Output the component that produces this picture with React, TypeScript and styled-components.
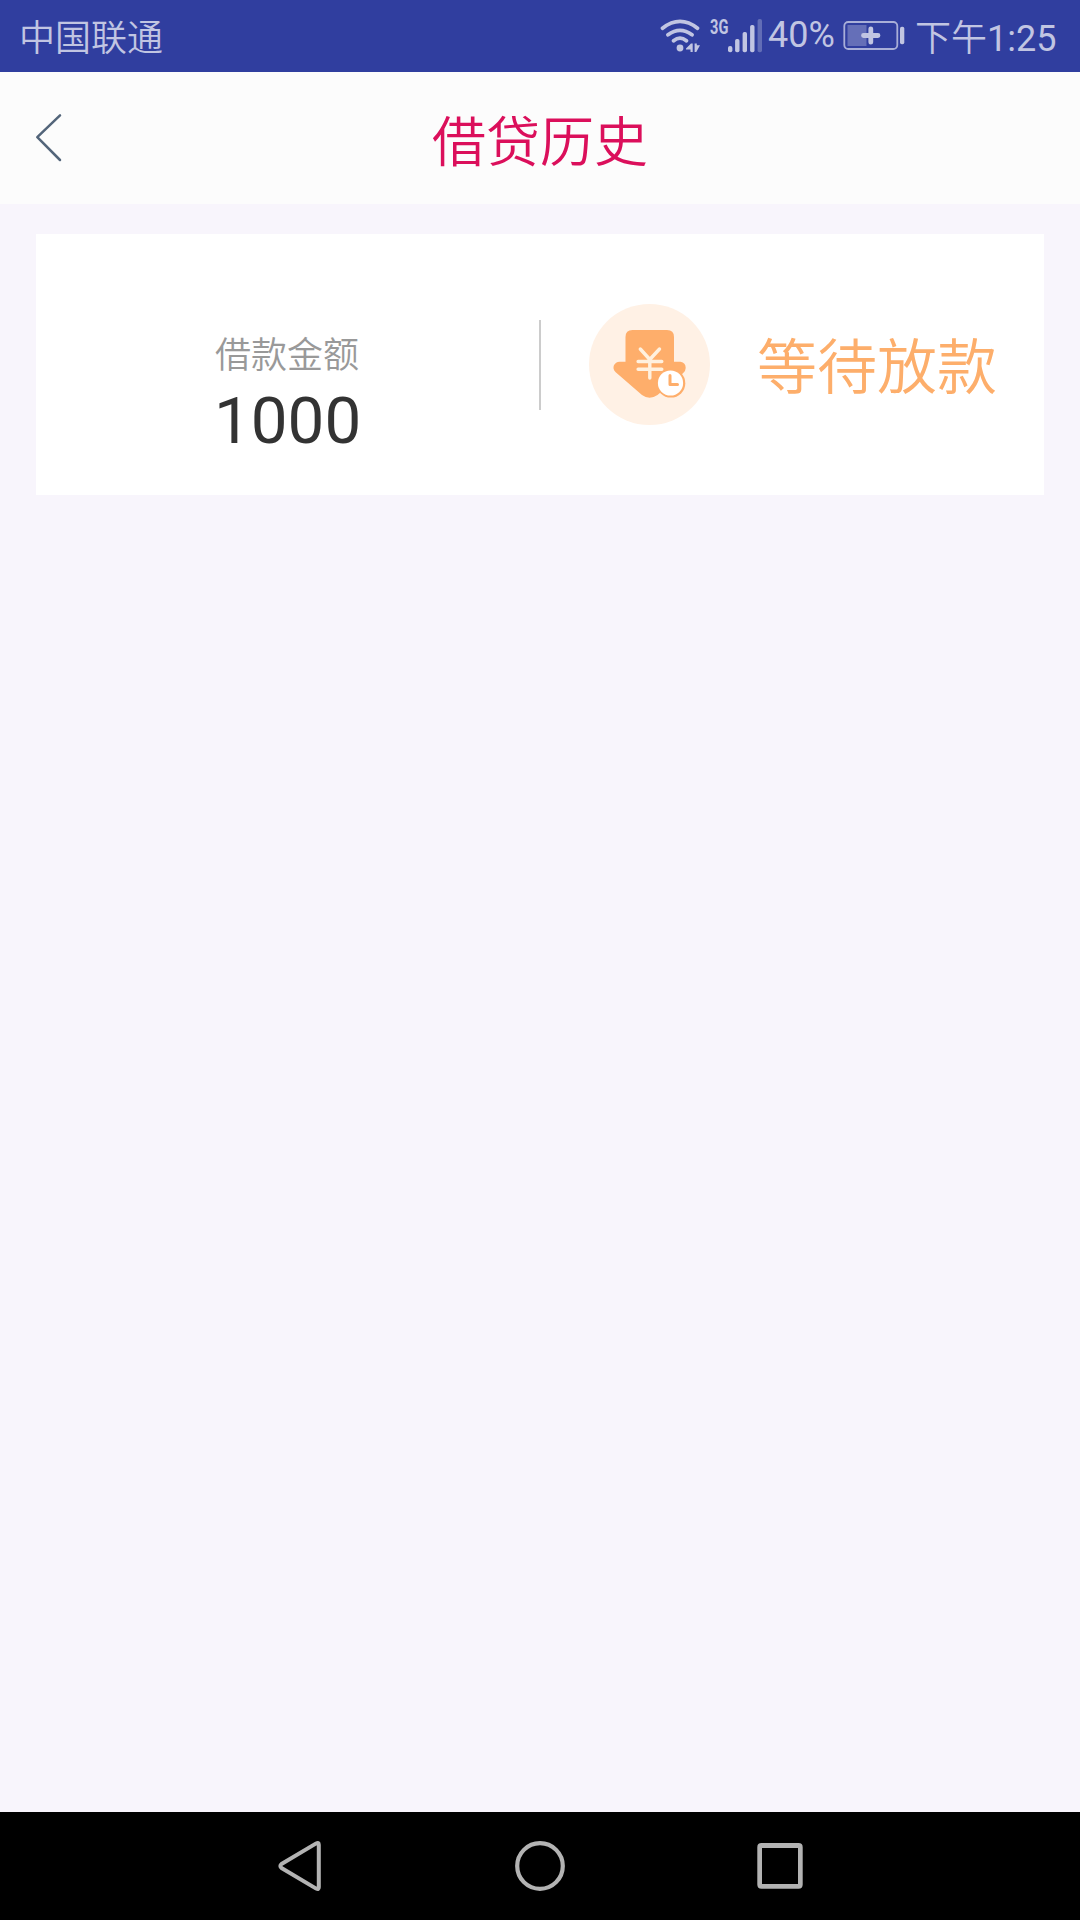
import React from 'react';
import styled, { createGlobalStyle } from 'styled-components';

const GlobalStyle = createGlobalStyle`
  * { box-sizing: border-box; }
  body { margin: 0; background: #f8f5fc; }
  svg { display: block; flex: none; }
`;

const Screen = styled.div`
  display: flex;
  flex-direction: column;
  width: 1080px;
  height: 1920px;
  overflow: hidden;
  background: #f8f5fc;
  font-family: Roboto, 'Noto Sans CJK SC', sans-serif;
`;

const StatusBar = styled.header`
  display: flex;
  align-items: flex-start;
  height: 72px;
  padding: 0 24px 0 19px;
  background: #303e9f;
`;

const StatusText = styled.span<{ $top: number; $left?: number; $weight?: number }>`
  flex: none;
  margin: ${p => p.$top}px 0 0 ${p => p.$left ?? 0}px;
  color: #c1c5e2;
  font-size: 36px;
  line-height: 44px;
  font-weight: ${p => p.$weight ?? 350};
  white-space: nowrap;
`;

const ClockDigits = styled.span`
  font-weight: 400;
`;

const Indicators = styled.div`
  display: flex;
  align-items: flex-start;
  width: 396px;
  height: 72px;
  margin-left: auto;
`;

const NetworkLabel = styled.span`
  width: 18px;
  margin: 17px 0 0 9px;
  color: #c1c5e2;
  font-size: 20px;
  font-weight: 700;
  line-height: 20px;
  white-space: nowrap;
  transform: scaleX(0.73);
  transform-origin: left center;
`;

const TitleBar = styled.div`
  display: grid;
  grid-template-columns: 96px 1fr 96px;
  height: 132px;
  background: #fcfcfc;
`;

const BackButton = styled.button`
  padding: 40px 0 0 33px;
  border: 0;
  background: none;
  display: flex;
  align-items: flex-start;
`;

const Title = styled.h1`
  margin: 32px 0 0;
  color: #db0f5b;
  font-size: 54px;
  font-weight: 350;
  line-height: 80px;
  text-align: center;
`;

const Content = styled.main`
  flex: 1;
  padding: 30px 36px;
`;

const LoanCard = styled.section`
  display: flex;
  align-items: center;
  height: 261px;
  background: #fff;
`;

const Amount = styled.div`
  display: flex;
  flex-direction: column;
  width: 503px;
  height: 261px;
  padding: 96px 0 0 179px;
`;

const AmountLabel = styled.span`
  color: #999;
  font-size: 36px;
  font-weight: 350;
  line-height: 52px;
`;

const AmountValue = styled.span`
  margin: 1px 0 0 -1px;
  color: #333;
  font-size: 65.5px;
  line-height: 76px;
`;

const Divider = styled.div`
  width: 2px;
  height: 90px;
  background: #ccc;
`;

const StatusBadge = styled.div`
  display: flex;
  align-items: center;
  justify-content: center;
  width: 121px;
  height: 121px;
  margin-left: 48px;
  border-radius: 50%;
  background: #fff1e5;
`;

const LoanStatus = styled.span`
  margin: 9px 0 0 47px;
  color: #fdae6b;
  font-size: 60px;
  font-weight: 350;
  line-height: 84px;
  white-space: nowrap;
`;

const NavBar = styled.nav`
  display: flex;
  align-items: center;
  justify-content: center;
  gap: 180px;
  height: 108px;
  background: #000;
`;

const NavButton = styled.button`
  display: flex;
  padding: 0;
  border: 0;
  background: none;
`;

const WifiIcon = () => (
  <svg width="41" height="72" viewBox="660 0 41 72" fill="none" stroke="#c1c5e2" strokeWidth="3.8" strokeLinecap="round">
    <path d="M662.5 28.2Q680 14.5 697.5 28.2M668 34.8Q680 26 692 34.8M673.6 40.7Q680 35.6 686.4 40.7" />
    <circle cx="680" cy="48" r="3.4" fill="#c1c5e2" stroke="none" />
    <path d="M686 48.5L691 43.5H692.7V52H690.5V49.4H686ZM694.6 43.5H696.8V45.3H700L696.3 52H694.6Z" fill="#c1c5e2" stroke="none" />
  </svg>
);

const SignalIcon = () => (
  <svg width="35" height="72" viewBox="728 0 35 72" fill="#c1c5e2">
    <rect x="728" y="46" width="4.4" height="6.3" rx="2" />
    <rect x="735.1" y="39" width="4.4" height="13.3" rx="1.8" />
    <rect x="742.6" y="32" width="4.4" height="20.3" rx="1.8" />
    <rect x="750.1" y="25" width="4.4" height="27.3" rx="1.8" />
    <rect x="757.6" y="19" width="4.4" height="33.3" rx="1.8" opacity=".35" />
  </svg>
);

const BatterySlot = styled.div`
  width: 62px;
  margin-left: auto;
`;

const BatteryIcon = () => (
  <svg width="62" height="72" viewBox="843 0 62 72" fill="#c1c5e2">
    <rect x="844.3" y="22" width="53" height="27" rx="4" fill="none" stroke="#a9afd8" strokeWidth="1.8" />
    <rect x="847.5" y="25" width="19" height="21" fill="#656fb8" />
    <path d="M863.5 35.5H878M870.8 28.8V42.2" fill="none" stroke="#c1c5e2" strokeWidth="4.8" strokeLinecap="round" />
    <rect x="900" y="26.7" width="4.3" height="17.6" rx="1.8" />
  </svg>
);

const Clock = styled.div`
  display: flex;
  width: 151px;
  padding-left: 10px;
`;

const PayoutIcon = () => (
  <svg width="121" height="121" viewBox="589.5 304 121 121" fill="none" strokeLinecap="round" strokeLinejoin="round">
    <path d="M626 337Q626 330 633 330H667.5Q674.5 330 674.5 337V361.7H681Q686.2 362.5 686.2 368Q686.2 371 683.5 373.2L658 395Q650 400.5 642.5 395L616.2 372.2C611.5 367.8 615 361.7 620 361.7H626Z" fill="#feae6b" />
    <path d="M640.8 349L650.3 359.5L660 349M650.3 359.5V378M638.6 361.5H662.3M638.6 369.2H662.3" stroke="#fff1df" strokeWidth="3.4" />
    <circle cx="671.4" cy="383.2" r="14.4" fill="#feae6b" />
    <circle cx="671" cy="383" r="12.6" fill="#fff" />
    <path d="M670.5 375.5V384.5H678" stroke="#feae6b" strokeWidth="3" />
  </svg>
);

export default function App() {
  return (
    <Screen>
      <GlobalStyle />
      <StatusBar>
        <StatusText $top={17}>中国联通</StatusText>
        <Indicators>
          <WifiIcon />
          <NetworkLabel>3G</NetworkLabel>
          <SignalIcon />
          <StatusText $top={13} $left={5} $weight={400}>40%</StatusText>
          <BatterySlot><BatteryIcon /></BatterySlot>
          <Clock>
            <StatusText $top={17}>下午<ClockDigits>1:25</ClockDigits></StatusText>
          </Clock>
        </Indicators>
      </StatusBar>
      <TitleBar>
        <BackButton aria-label="返回">
          <svg width="30" height="50" viewBox="33 112 30 50" fill="none">
            <path d="M60 115.3L37.3 137.2L60 160" stroke="#53657a" strokeWidth="2.5" strokeLinecap="round" strokeLinejoin="round" />
          </svg>
        </BackButton>
        <Title>借贷历史</Title>
      </TitleBar>
      <Content>
        <LoanCard>
          <Amount>
            <AmountLabel>借款金额</AmountLabel>
            <AmountValue>1000</AmountValue>
          </Amount>
          <Divider />
          <StatusBadge><PayoutIcon /></StatusBadge>
          <LoanStatus>等待放款</LoanStatus>
        </LoanCard>
      </Content>
      <NavBar>
        <NavButton>
          <svg width="60" height="60" viewBox="270 1836 60 60" fill="none">
            <path d="M318.8 1844.8Q318.8 1842 316.2 1843.4L281.5 1864Q279.2 1866 281.5 1868L316.2 1888.6Q318.8 1890 318.8 1887.2Z" stroke="#b3b3b3" strokeWidth="4" strokeLinejoin="round" />
          </svg>
        </NavButton>
        <NavButton>
          <svg width="60" height="60" viewBox="510 1836 60 60" fill="none">
            <circle cx="540" cy="1866" r="22.8" stroke="#b3b3b3" strokeWidth="4.2" />
          </svg>
        </NavButton>
        <NavButton>
          <svg width="60" height="60" viewBox="750 1836 60 60">
            <path fillRule="evenodd" fill="#b3b3b3" d="M761.5 1843H798.5Q802.7 1843 802.7 1847.2V1884.6Q802.7 1888.8 798.5 1888.8H761.5Q757.3 1888.8 757.3 1884.6V1847.2Q757.3 1843 761.5 1843ZM762 1848V1884H798V1848Z" />
          </svg>
        </NavButton>
      </NavBar>
    </Screen>
  );
}
